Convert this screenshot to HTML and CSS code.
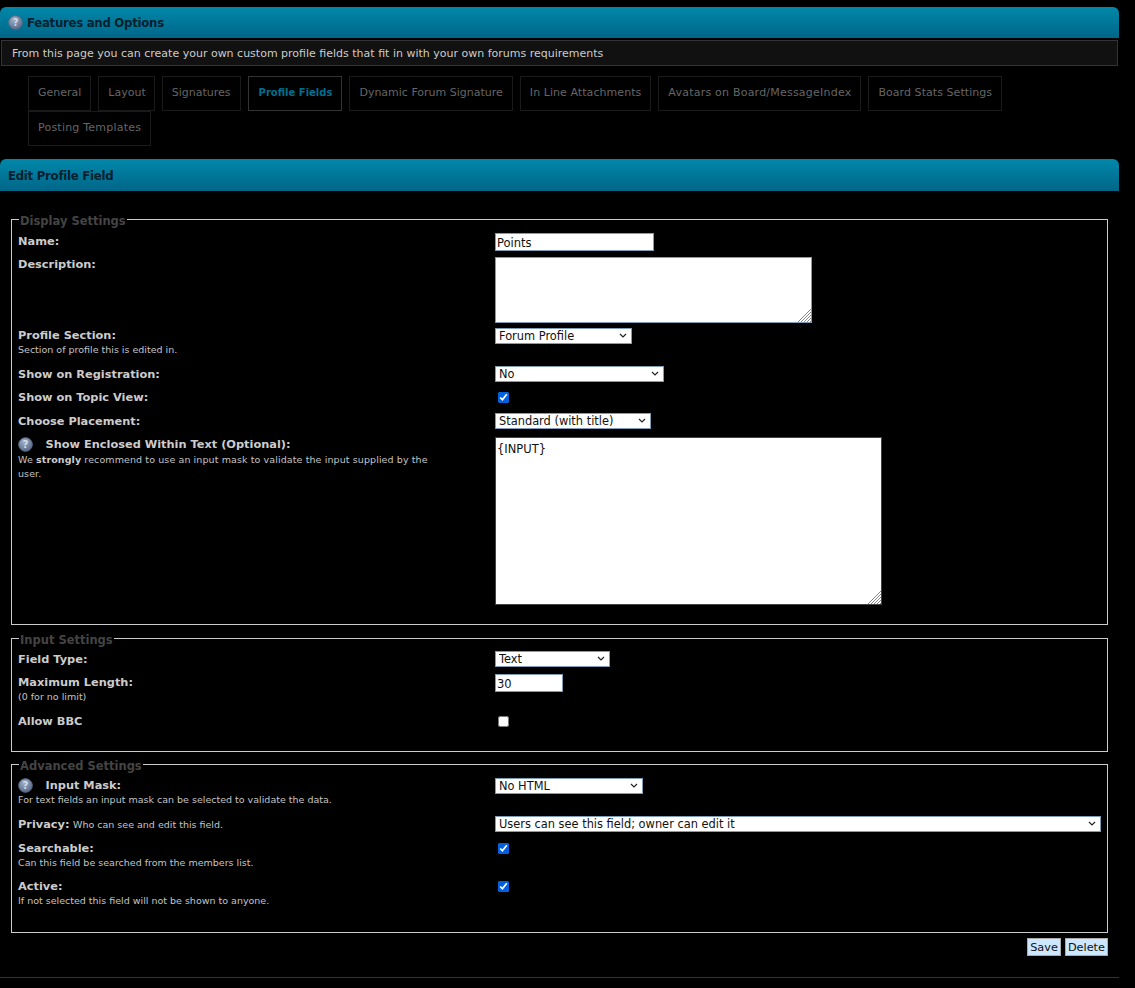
FILE: index.html
```html
<!DOCTYPE html>
<html lang="en">
<head>
  <meta charset="UTF-8" />
  <title>Edit Profile Field</title>
  <link rel="stylesheet" href="styles.css">
</head>
<body>
  <div class="page">
    <h3 class="catbar catbar-main">
      <svg class="help" viewBox="0 0 16 16"><use href="#help-icon"></use></svg>
      Features and Options
    </h3>
    <p class="info">From this page you can create your own custom profile fields that fit in with your own forums requirements</p>

    <ul class="tabs">
      <li><a href="#">General</a></li>
      <li class="tab-layout"><a href="#">Layout</a></li>
      <li><a href="#">Signatures</a></li>
      <li class="active"><a href="#">Profile Fields</a></li>
      <li><a href="#">Dynamic Forum Signature</a></li>
      <li class="tab-slight"><a href="#">In Line Attachments</a></li>
      <li class="tab-wide"><a href="#">Avatars on Board/MessageIndex</a></li>
      <li class="tab-slight"><a href="#">Board Stats Settings</a></li>
      <li class="tab-wide"><a href="#">Posting Templates</a></li>
    </ul>

    <h3 class="catbar">Edit Profile Field</h3>

    <form class="settings" onsubmit="return false">
      <fieldset class="group group-display">
        <legend>Display Settings</legend>
        <div class="row row-name">
          <div class="label"><strong>Name:</strong></div>
          <div><input class="w-name" type="text" value="Points"></div>
        </div>
        <div class="row row-desc">
          <div class="label"><strong>Description:</strong></div>
          <div><textarea class="area-desc"></textarea></div>
        </div>
        <div class="row row-section">
          <div class="label"><strong>Profile Section:</strong><br><span class="small">Section of profile this is edited in.</span></div>
          <div><select class="w-section"><option>Forum Profile</option></select></div>
        </div>
        <div class="row row-reg">
          <div class="label"><strong>Show on Registration:</strong></div>
          <div><select class="w-reg"><option>No</option></select></div>
        </div>
        <div class="row row-topic">
          <div class="label"><strong>Show on Topic View:</strong></div>
          <div><input class="check" type="checkbox" checked></div>
        </div>
        <div class="row row-place">
          <div class="label"><strong>Choose Placement:</strong></div>
          <div><select class="w-place"><option>Standard (with title)</option></select></div>
        </div>
        <div class="row">
          <div class="label label-enclose">
            <svg class="help help-inline" viewBox="0 0 16 16"><use href="#help-icon"></use></svg>
            <strong>Show Enclosed Within Text (Optional):</strong><br>
            <span class="small small-wide">We <strong>strongly</strong> recommend to use an input mask to validate the input supplied by the user.</span>
          </div>
          <div><textarea class="area-enclose">{INPUT}</textarea></div>
        </div>
      </fieldset>

      <fieldset class="group group-input">
        <legend>Input Settings</legend>
        <div class="row row-type">
          <div class="label"><strong>Field Type:</strong></div>
          <div><select class="w-type"><option>Text</option></select></div>
        </div>
        <div class="row row-max">
          <div class="label"><strong>Maximum Length:</strong><br><span class="small">(0 for no limit)</span></div>
          <div><input class="w-max" type="text" value="30"></div>
        </div>
        <div class="row">
          <div class="label"><strong>Allow BBC</strong></div>
          <div><input class="check" type="checkbox"></div>
        </div>
      </fieldset>

      <fieldset class="group group-advanced">
        <legend>Advanced Settings</legend>
        <div class="row row-mask">
          <div class="label">
            <svg class="help help-inline" viewBox="0 0 16 16"><use href="#help-icon"></use></svg>
            <strong>Input Mask:</strong><br>
            <span class="small">For text fields an input mask can be selected to validate the data.</span>
          </div>
          <div><select class="w-mask"><option>No HTML</option></select></div>
        </div>
        <div class="row row-privacy">
          <div class="label"><strong>Privacy:</strong> <span class="small">Who can see and edit this field.</span></div>
          <div><select class="w-full"><option>Users can see this field; owner can edit it</option></select></div>
        </div>
        <div class="row row-search">
          <div class="label"><strong>Searchable:</strong><br><span class="small">Can this field be searched from the members list.</span></div>
          <div><input class="check" type="checkbox" checked></div>
        </div>
        <div class="row">
          <div class="label"><strong>Active:</strong><br><span class="small">If not selected this field will not be shown to anyone.</span></div>
          <div><input class="check" type="checkbox" checked></div>
        </div>
      </fieldset>

      <div class="actions">
        <button type="button">Save</button>
        <button type="button">Delete</button>
      </div>
    </form>

    <hr class="rule">
  </div>

  <svg width="0" height="0" class="defs">
    <defs>
      <radialGradient id="help-fill" cx="40%" cy="30%" r="80%">
        <stop offset="0" stop-color="#9fb0c8"/>
        <stop offset="1" stop-color="#4f6282"/>
      </radialGradient>
      <symbol id="help-icon" viewBox="0 0 16 16">
        <circle cx="8" cy="8" r="7.3" fill="url(#help-fill)" stroke="#5c6b85" stroke-width="1"/>
        <text x="8" y="12" text-anchor="middle" font-family="DejaVu Sans" font-size="11" font-weight="700" fill="#d4dbe6">?</text>
      </symbol>
    </defs>
  </svg>
</body>
</html>
```

FILE: styles.css
```css
html, body {
  margin: 0;
  background: #000;
}
body {
  font-family: "DejaVu Sans", Verdana, sans-serif;
  font-size: 11px;
  color: #ccc;
}
.page {
  width: 1119px;
  padding-top: 7px;
}
.defs {
  position: absolute;
}

/* title bars */
.catbar {
  margin: 0;
  height: 32px;
  line-height: 34px;
  padding-left: 8px;
  font-size: 13px;
  letter-spacing: -.25px;
  font-stretch: condensed;
  font-weight: bold;
  color: #04202e;
  background: linear-gradient(#0088aa, #006688);
  border-radius: 6px 6px 0 0;
}
.catbar-main {
  height: 31px;
  line-height: 31px;
  padding-left: 8px;
  display: flex;
  align-items: center;
  gap: 4px;
}
.help {
  width: 15px;
  height: 15px;
  flex: none;
}
.help-inline {
  vertical-align: middle;
  margin: -4px 9px -3px 0;
}
.info {
  margin: 2px 1px 0;
  height: 24px;
  line-height: 26px;
  padding-left: 10px;
  background: #111;
  border: 1px solid #333;
  font-size: 11px;
  color: #ccc;
  box-sizing: content-box;
  width: 1105px;
}

/* tabs */
.tabs {
  list-style: none;
  margin: 10px 0 13px;
  padding: 0 0 0 28px;
  display: flex;
  flex-wrap: wrap;
  width: 1000px;
}
.tabs li {
  margin-right: 7px;
}
.tabs a {
  display: block;
  height: 33px;
  line-height: 32px;
  padding: 0 9px;
  border: 1px solid #1a1a1a;
  font-size: 11px;
  color: #666;
  text-decoration: none;
}
.tabs .tab-layout a {
  padding-right: 8px;
}
.tabs .tab-wide a {
  letter-spacing: .22px;
}
.tabs .tab-slight a {
  letter-spacing: .06px;
}
.tabs .active a {
  padding-left: 10px;
  border-color: #333;
  color: #006f8f;
  font-size: 10px;
  font-weight: bold;
}

/* form */
.settings {
  padding: 21px 11px 0;
}
.group {
  margin: 0 0 5px;
  padding: 0 6px;
  border: 1px solid #ccc;
  min-width: 0;
}
.group legend {
  margin-left: 1px;
  padding: 0 1px;
  font-size: 11.5px;
  font-weight: bold;
  color: #444;
  transform: translateY(2px);
}
.group-display {
  height: 411px;
  margin-bottom: 6px;
}
.group-input {
  height: 119px;
}
.group-advanced {
  height: 174px;
}
.row {
  display: grid;
  grid-template-columns: 477px 1fr;
}
.label {
  padding-top: 1px;
  line-height: 14px;
}
.row-desc .label, .row-section .label, .label-enclose {
  padding-top: 0;
}
.label strong {
  font-size: 11.35px;
  color: #ccc;
}
.small {
  font-size: 9.5px;
  color: #c4c4c4;
}
.small strong {
  font-size: 9.5px;
}
.small-wide {
  letter-spacing: .1px;
}
.label-enclose {
  width: 425px;
  line-height: 14.5px;
}
input[type="text"], textarea, select {
  display: block;
  box-sizing: border-box;
  margin: 0;
  background: #fff;
  color: #111;
  border: 1px solid #7f9db9;
  font-family: "DejaVu Sans", Verdana, sans-serif;
  font-size: 11.5px;
}
input[type="text"] {
  height: 18px;
  padding: 2px 1px 0;
}
select {
  height: 16px;
  padding: 0 16px 0 3px;
  border-radius: 0;
  font-size: 11.4px;
  appearance: none;
  -webkit-appearance: none;
  background-image: url("data:image/svg+xml,%3Csvg xmlns='http://www.w3.org/2000/svg' width='8' height='6'%3E%3Cpath d='M1 1l3 3 3-3' fill='none' stroke='%23222' stroke-width='1.2'/%3E%3C/svg%3E");
  background-repeat: no-repeat;
  background-position: right 4px center;
}
textarea {
  padding: 4px 1px 2px;
}
textarea::-webkit-resizer {
  background:
    linear-gradient(135deg, #fff 50%, transparent 50%),
    repeating-linear-gradient(135deg, #fff 0 1.1px, #888 1.1px 2.1px);
}
.check {
  display: block;
  width: 11px;
  height: 11px;
  margin: 3px 0 0 3px;
  accent-color: #0060df;
}
.w-name { width: 159px; }
.w-section { width: 137px; }
.w-reg { width: 169px; }
.w-place { width: 156px; }
.w-type { width: 115px; }
.w-max { width: 68px; }
.w-mask { width: 148px; margin-top: 1px; }
.w-full { width: 100%; }
.area-desc {
  width: 317px;
  height: 66px;
}
.area-enclose {
  width: 387px;
  height: 168px;
  border-color: #444;
}
.row-name { margin: 7px 0 6px; }
.row-desc { margin-bottom: 5px; }
.row-section { height: 38px; }
.row-reg { height: 23px; }
.row-topic { height: 24px; }
.row-place { height: 24px; }
.row-type { margin-top: 6px; height: 23px; }
.row-max { height: 39px; }
.row-mask { margin-top: 6px; height: 39px; }
.row-privacy { height: 24px; }
.row-search { height: 38px; }

.actions {
  display: flex;
  justify-content: flex-end;
  gap: 4px;
}
.actions button {
  height: 18px;
  padding: 0 2px;
  font-family: "DejaVu Sans", Verdana, sans-serif;
  font-size: 11.3px;
  color: #111;
  background: #cde7ff;
  border: 1px solid #aaa;
}
.rule {
  margin: 21px 0 0;
  border: 0;
  border-top: 1px solid #333;
}
```
